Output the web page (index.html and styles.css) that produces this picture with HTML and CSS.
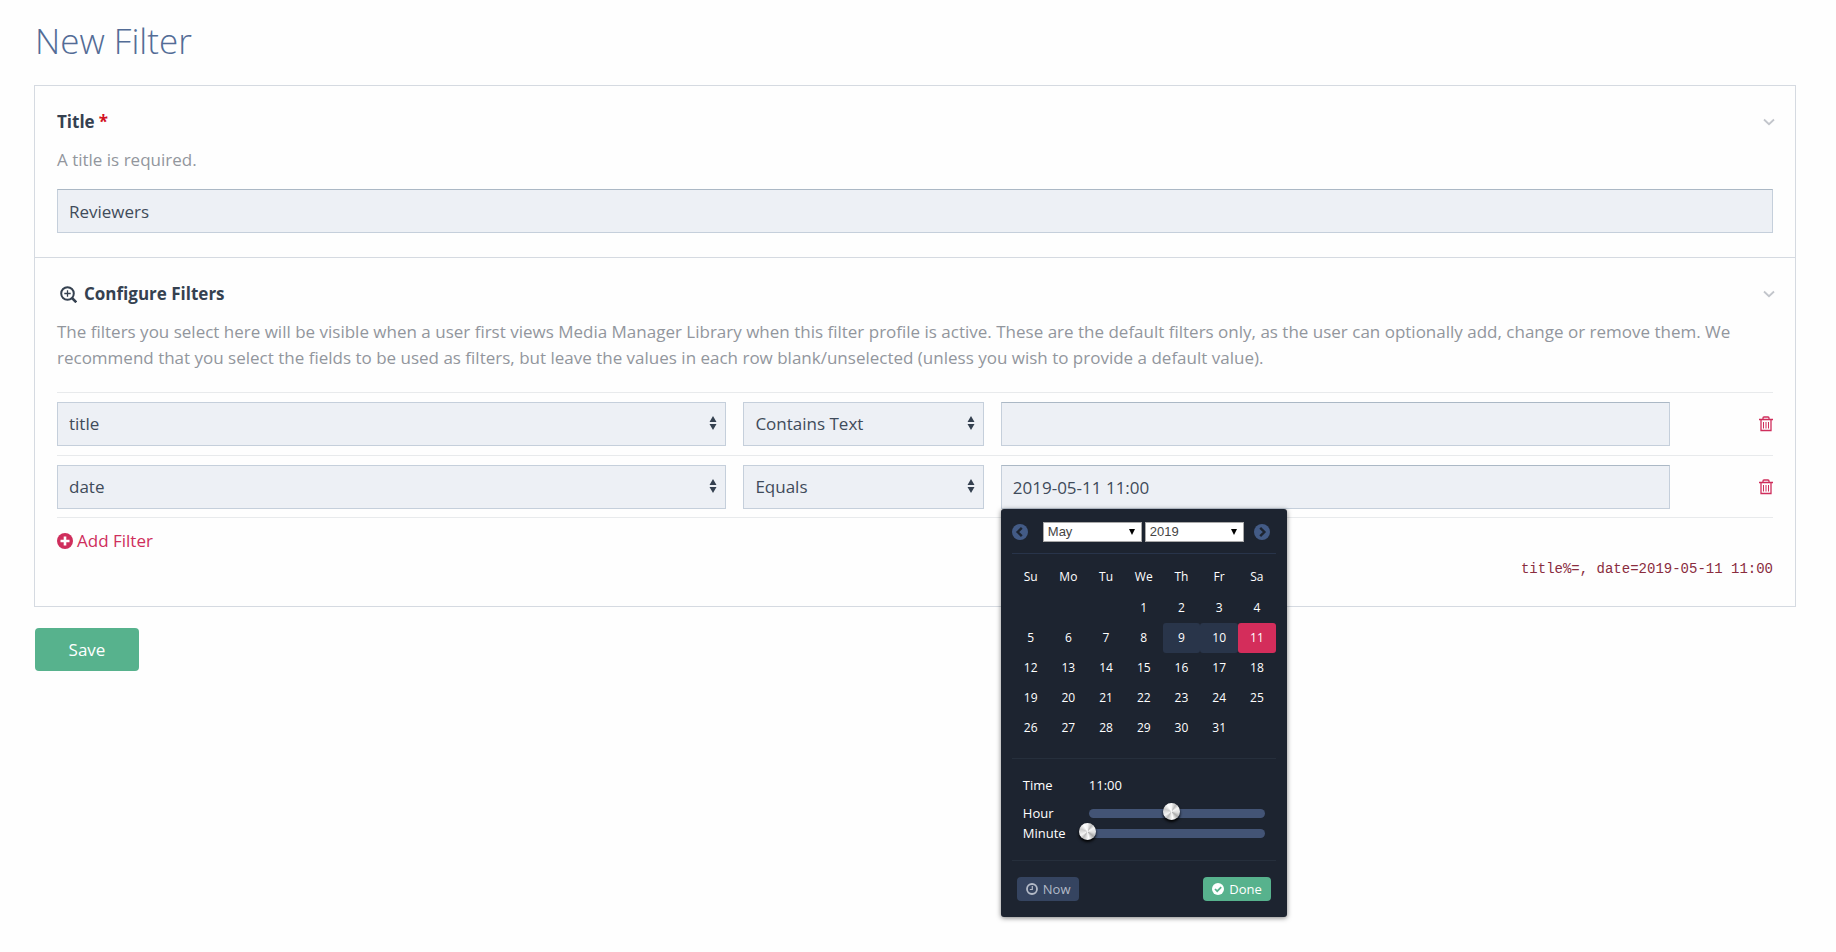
FILE: index.html
```html
<!DOCTYPE html>
<html lang="en">
<head>
<meta charset="utf-8">
<title>New Filter</title>
<link rel="stylesheet" href="styles.css">
</head>
<body>
<svg class="sprite" aria-hidden="true">
  <symbol id="chevron" viewBox="0 0 12 8"><path d="M1 1.500 6 6.200 11 1.500" fill="none" stroke="currentColor" stroke-width="1.800"/></symbol>
  <symbol id="trash" viewBox="0 0 14 16"><path d="M0 3.500h14M4 3.500V2q0-1 1-1h4q1 0 1 1v1.500M2 4v10.500h10V4" fill="none" stroke="currentColor" stroke-width="1.300"/><path d="M4.500 6v6.500M7 6v6.500M9.500 6v6.500" fill="none" stroke="currentColor"/></symbol>
  <symbol id="sort" viewBox="0 0 8 14"><path d="M4 0 7.500 6H.5zM4 14 7.500 8H.5z" fill="currentColor"/></symbol>
</svg>
<main class="page">
  <h1 class="page-title">New Filter</h1>
  <form class="form">
    <section class="field">
      <div class="field-head">
        <label class="field-label" for="title">Title <span class="required">*</span></label>
        <button class="toggle" type="button" aria-label="Collapse title"><svg class="chevron"><use href="#chevron"/></svg></button>
      </div>
      <p class="description">A title is required.</p>
      <input class="control" id="title" type="text" value="Reviewers">
    </section>
    <section class="field field-filters">
      <div class="field-head">
        <h2 class="field-label"><svg class="zoom-icon" viewBox="0 0 17 17"><circle cx="7.500" cy="7.500" r="6.300" fill="none" stroke="currentColor" stroke-width="2"/><path d="m12 12 4.300 4.300" stroke="currentColor" stroke-width="2.600"/><path d="M7.500 4.300v6.400M4.300 7.500h6.400" stroke="currentColor" stroke-width="1.300"/></svg>Configure Filters</h2>
        <button class="toggle" type="button" aria-label="Collapse filters"><svg class="chevron"><use href="#chevron"/></svg></button>
      </div>
      <p class="description">The filters you select here will be visible when a user first views Media Manager Library when this filter profile is active. These are the default filters only, as the user can optionally add, change or remove them. We recommend that you select the fields to be used as filters, but leave the values in each row blank/unselected (unless you wish to provide a default value).</p>
      <div class="rows">
        <div class="row">
          <div class="cell"><select class="control" aria-label="Field"><option>title</option></select><svg class="sort"><use href="#sort"/></svg></div>
          <div class="cell"><select class="control" aria-label="Operator"><option>Contains Text</option></select><svg class="sort"><use href="#sort"/></svg></div>
          <div class="cell"><input class="control" type="text" aria-label="Value"></div>
          <button class="delete" type="button" aria-label="Delete row"><svg class="trash"><use href="#trash"/></svg></button>
        </div>
        <div class="row">
          <div class="cell"><select class="control" aria-label="Field"><option>date</option></select><svg class="sort"><use href="#sort"/></svg></div>
          <div class="cell"><select class="control" aria-label="Operator"><option>Equals</option></select><svg class="sort"><use href="#sort"/></svg></div>
          <div class="cell"><input class="control" type="text" aria-label="Date value" value="2019-05-11 11:00">
            <div class="picker">
              <div class="picker-head">
                <button class="nav" type="button" aria-label="Previous month"><svg class="nav-icon" viewBox="0 0 16 16"><circle cx="8" cy="8" r="8" fill="#435b86"/><path d="M9.800 3.800 5.600 8l4.200 4.200" fill="none" stroke="#1d2430" stroke-width="2.400"/></svg></button>
                <div class="picker-selects">
                  <span class="mini-wrap"><select class="mini" aria-label="Month"><option>May</option></select></span>
                  <span class="mini-wrap"><select class="mini" aria-label="Year"><option>2019</option></select></span>
                </div>
                <button class="nav" type="button" aria-label="Next month"><svg class="nav-icon" viewBox="0 0 16 16"><circle cx="8" cy="8" r="8" fill="#435b86"/><path d="M6.200 3.800 10.400 8l-4.200 4.200" fill="none" stroke="#1d2430" stroke-width="2.400"/></svg></button>
              </div>
              <table class="calendar">
                <thead><tr><th>Su</th><th>Mo</th><th>Tu</th><th>We</th><th>Th</th><th>Fr</th><th>Sa</th></tr></thead>
                <tbody>
                  <tr><td></td><td></td><td></td><td>1</td><td>2</td><td>3</td><td>4</td></tr>
                  <tr><td>5</td><td>6</td><td>7</td><td>8</td><td class="recent">9</td><td class="recent">10</td><td class="selected">11</td></tr>
                  <tr><td>12</td><td>13</td><td>14</td><td>15</td><td>16</td><td>17</td><td>18</td></tr>
                  <tr><td>19</td><td>20</td><td>21</td><td>22</td><td>23</td><td>24</td><td>25</td></tr>
                  <tr><td>26</td><td>27</td><td>28</td><td>29</td><td>30</td><td>31</td><td></td></tr>
                </tbody>
              </table>
              <div class="time">
                <div class="time-row time-value"><span>Time</span><output>11:00</output></div>
                <div class="time-row"><label for="hour">Hour</label><div class="slider"><input id="hour" class="range" type="range" min="0" max="23" value="11"></div></div>
                <div class="time-row"><label for="minute">Minute</label><div class="slider"><input id="minute" class="range" type="range" min="0" max="59" value="0"></div></div>
              </div>
              <div class="picker-foot">
                <button class="small-btn now" type="button"><svg class="btn-icon" viewBox="0 0 12 12"><circle cx="6" cy="6" r="5" fill="none" stroke="currentColor" stroke-width="1.800"/><path d="M6.300 3v3.500H3.800" fill="none" stroke="currentColor" stroke-width="1.200"/></svg>Now</button>
                <button class="small-btn done" type="button"><svg class="btn-icon" viewBox="0 0 12 12"><circle cx="6" cy="6" r="6" fill="currentColor"/><path d="m3 6 2.200 2.200L9.200 4.200" fill="none" stroke="#57b28d" stroke-width="1.700"/></svg>Done</button>
              </div>
            </div>
          </div>
          <button class="delete" type="button" aria-label="Delete row"><svg class="trash"><use href="#trash"/></svg></button>
        </div>
      </div>
      <a class="add" href="#"><svg class="add-icon" viewBox="0 0 16 16"><circle cx="8" cy="8" r="8" fill="currentColor"/><path d="M8 3.500v9M3.500 8h9" stroke="#fff" stroke-width="2.600"/></svg>Add Filter</a>
      <code class="selector">title%=, date=2019-05-11 11:00</code>
    </section>
  </form>
  <button class="save" type="submit">Save</button>
</main>
</body>
</html>
```
FILE: styles.css
```css
* { box-sizing: border-box; }
body {
  margin: 0;
  background: #fefefe;
  color: #354150;
  font: 17px/26px "Open Sans", "Noto Sans", sans-serif;
}
button, input, select { font: inherit; color: inherit; }
button { margin: 0; padding: 0; border: 0; background: none; cursor: pointer; }
svg { display: block; flex: none; }
.sprite { position: absolute; width: 0; height: 0; }
.page { min-height: 100vh; padding: 17px 40px 40px 34px; }
.page-title {
  margin: 0 0 20px 1px;
  color: #536c96;
  font-size: 35px;
  line-height: 48px;
  font-weight: 300;
}
.form { border: 1px solid #d5dae1; }
.field { padding: 23px 22px 24px; }
.field-filters { border-top: 1px solid #d5dae1; }
.field-head { display: flex; justify-content: space-between; align-items: center; }
.field-label {
  display: flex;
  align-items: center;
  gap: 4px;
  margin: 0;
  font-size: 17px;
  line-height: 26px;
  font-weight: 700;
}
.required { color: #d2121f; }
.zoom-icon { width: 17px; height: 17px; margin: 0 3px; }
.chevron { width: 12px; height: 8px; margin-right: -2px; color: #c2c5cb; }
.description { margin: 12px 0 16px; color: #92969d; }
.control {
  display: block;
  width: 100%;
  height: 44px;
  padding: 0 11px;
  border: 1px solid #c5cfdb;
  border-radius: 0;
  background: #edf0f5;
  color: #3f4b5a;
  appearance: none;
}
input.control { border-top-color: #abb8c5; }
.rows { margin-top: 21px; border-top: 1px solid #e8eaec; }
.row {
  display: grid;
  grid-template-columns: 40fr 15fr 40fr 5fr;
  align-items: center;
  padding: 9px 0;
  border-bottom: 1px solid #e8eaec;
}
.row:last-child { padding-bottom: 8px; }
.cell { position: relative; margin-right: 17px; }
.sort { position: absolute; top: 14px; right: 9px; width: 8px; height: 14px; pointer-events: none; }
.delete { justify-self: end; color: #cf2e5c; }
.trash { width: 14px; height: 16px; }
.add {
  display: flex;
  align-items: center;
  gap: 4px;
  width: max-content;
  margin-top: 10px;
  color: #cf2e5c;
  text-decoration: none;
}
.add-icon { width: 16px; height: 16px; }
.selector {
  display: block;
  margin-top: 2px;
  color: #8a2c3e;
  font: 14px/26px "Liberation Mono", monospace;
  text-align: right;
}
.save {
  min-width: 104px;
  height: 43px;
  margin: 21px 0 0 1px;
  border-radius: 4px;
  background: #57b28d;
  color: #fff;
}
.picker {
  position: absolute;
  z-index: 2;
  top: 100%;
  left: 0;
  width: 286px;
  padding: 11px 11px 16px;
  border-radius: 3px;
  background: #1d2430;
  box-shadow: 0 1px 5px rgba(0, 0, 0, .5);
  color: #fff;
  font-size: 12px;
  line-height: 20px;
}
.picker-head {
  display: flex;
  justify-content: space-between;
  align-items: center;
  padding: 2px 6px 11px 0;
  border-bottom: 1px solid #28344a;
}
.nav-icon { width: 16px; height: 16px; }
.picker-selects { display: flex; gap: 3px; margin-left: 5px; }
.mini-wrap { position: relative; }
.mini-wrap::after {
  content: "";
  position: absolute;
  top: 7px;
  right: 7px;
  border: solid transparent;
  border-width: 6px 3px 0;
  border-top-color: #000;
}
.mini {
  display: block;
  width: 99px;
  height: 20px;
  padding: 0 4px;
  border: 1px solid #a9a9a9;
  border-radius: 0;
  background: #fff;
  color: #444;
  font: 13px/18px "Liberation Sans", sans-serif;
  appearance: none;
}
.calendar {
  width: 100%;
  margin: 6px 0 15px;
  border-collapse: separate;
  border-spacing: 0;
  table-layout: fixed;
  text-align: center;
}
.calendar th { height: 33px; padding: 0; font-weight: 400; }
.calendar td { height: 30px; padding: 0; border-radius: 3px; }
.recent { background: #29354a; }
.selected { background: #d42d5b; }
.time {
  padding: 16px 11px 17px;
  border-top: 1px solid #262f3c;
  border-bottom: 1px solid #262f3c;
  font-size: 13px;
}
.time-row { display: grid; grid-template-columns: 66px 1fr; align-items: center; height: 20px; }
.time-value { margin-bottom: 8px; }
.slider { height: 9px; border-radius: 5px; background: #435475; }
.range {
  display: block;
  width: calc(100% + 17px);
  height: 17px;
  margin: -6px 0 0 -10px;
  background: none;
  appearance: none;
}
.range::-webkit-slider-thumb {
  width: 17px;
  height: 17px;
  border-radius: 50%;
  background: conic-gradient(#f5f5f5, #bbb 35deg, #f5f5f5 60deg, #ddd 100deg, #aaa 130deg, #fff 170deg, #bbb 215deg, #f5f5f5 240deg, #ccc 290deg, #fff 330deg, #f5f5f5);
  box-shadow: 0 2px 3px #000;
  appearance: none;
}
.picker-foot { display: flex; justify-content: space-between; padding: 16px 5px 0; }
.small-btn {
  display: flex;
  align-items: center;
  gap: 5px;
  height: 24px;
  padding: 0 9px;
  border-radius: 4px;
  font-size: 13px;
}
.now { background: #354460; color: #b3bac7; }
.done { background: #57b28d; color: #fff; }
.btn-icon { width: 12px; height: 12px; }
```
